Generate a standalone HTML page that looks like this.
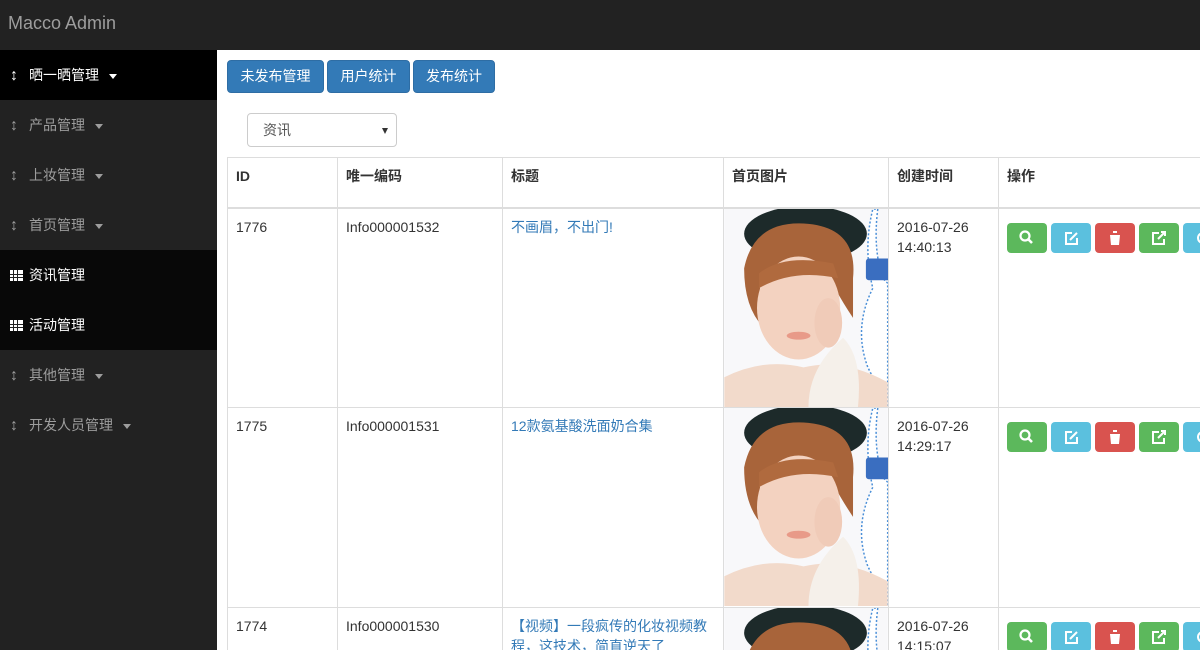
<!DOCTYPE html>
<html><head><meta charset="utf-8"><style>
*{box-sizing:border-box;margin:0;padding:0}
html,body{width:1200px;height:650px;overflow:hidden}
body{font-family:"Liberation Sans","Noto Sans CJK SC",sans-serif;font-size:14px;color:#333;background:#fff;position:relative}
.nav{position:absolute;left:0;top:0;width:1200px;height:50px;background:#222}
.brand{position:absolute;left:8px;top:13px;font-size:18px;color:#9d9d9d}
.side{position:absolute;left:0;top:50px;width:217px;height:600px;background:#222}
.it{height:50px;line-height:50px;padding-left:10px;color:#9d9d9d;position:relative}
.it.act{background:#000;color:#fff}
.it.sub{background:#080808;color:#fff}
.ar{display:inline-block;width:8px;margin-right:11px;font-weight:bold;font-size:16px}
.caret{display:inline-block;width:0;height:0;border-left:4px solid transparent;border-right:4px solid transparent;border-top:5px solid currentColor;margin-left:10px;vertical-align:middle}
.grid{display:inline-block;width:13px;height:11px;margin-right:6px;vertical-align:-1px;background:
linear-gradient(90deg,transparent 3px,#222 3px,#222 4px,transparent 4px,transparent 7px,#222 7px,#222 8px,transparent 8px),
linear-gradient(0deg,transparent 3px,#222 3px,#222 4px,transparent 4px,transparent 6px,#222 6px,#222 7px,transparent 7px),#fff}
.btn{position:absolute;top:60px;height:33px;line-height:31px;background:#337ab7;border:1px solid #2e6da4;color:#fff;border-radius:4px;text-align:center;font-size:14px}
.sel{position:absolute;left:247px;top:113px;width:150px;height:34px;border:1px solid #ccc;border-radius:4px;line-height:32px;padding-left:15px;color:#555}
.sel:after{content:"";position:absolute;right:8px;top:14px;border-left:3px solid transparent;border-right:3px solid transparent;border-top:6px solid #333}
table{position:absolute;left:227px;top:157px;border-collapse:collapse;table-layout:fixed;width:1000px}
td,th{border:1px solid #ddd;padding:8px;vertical-align:top;text-align:left;line-height:20px}
th{height:50px;border-bottom:2px solid #ddd}
td{height:200px}
a{color:#337ab7;text-decoration:none}
td.img{padding:0}
td svg{display:block}
</style></head><body>
<div class="nav"><div class="brand">Macco Admin</div></div>
<div class="side">
<div class="it act"><span class="ar">↕</span>晒一晒管理<span class="caret"></span></div>
<div class="it"><span class="ar">↕</span>产品管理<span class="caret"></span></div>
<div class="it"><span class="ar">↕</span>上妆管理<span class="caret"></span></div>
<div class="it"><span class="ar">↕</span>首页管理<span class="caret"></span></div>
<div class="it sub"><span class="grid"></span>资讯管理</div>
<div class="it sub"><span class="grid"></span>活动管理</div>
<div class="it"><span class="ar">↕</span>其他管理<span class="caret"></span></div>
<div class="it"><span class="ar">↕</span>开发人员管理<span class="caret"></span></div>
</div>
<div class="btn" style="left:227px;width:97px">未发布管理</div>
<div class="btn" style="left:327px;width:83px">用户统计</div>
<div class="btn" style="left:413px;width:82px">发布统计</div>
<div class="sel">资讯</div>
<svg width="0" height="0" style="position:absolute"><defs>
<symbol id="face" viewBox="0 0 165 200">
<rect width="165" height="200" fill="#f8f8fa"/>
<path d="M155 0 Q150 40 160 70 L165 75 L165 200 L145 160 Q130 120 150 80 Q140 40 150 0Z" fill="#fff" stroke="#4a8fd8" stroke-width="1.5" stroke-dasharray="2 2"/>
<rect x="143" y="50" width="25" height="22" fill="#3a6ec0" rx="3"/>
<ellipse cx="82" cy="25" rx="62" ry="28" fill="#1d2a2a"/>
<path d="M20 60 Q30 10 85 15 Q135 20 130 70 L130 110 Q110 80 100 55 Q70 60 35 70 L40 120 Q20 100 20 60Z" fill="#a8643a"/>
<ellipse cx="75" cy="100" rx="42" ry="52" fill="#f3d2c0"/>
<path d="M35 65 Q60 45 110 55 L115 70 Q70 60 35 80Z" fill="#b06a3e"/>
<path d="M0 170 Q40 150 80 160 Q120 150 165 175 L165 200 L0 200Z" fill="#f2dacb"/>
<path d="M120 130 Q140 150 135 200 L85 200 Q85 160 120 130Z" fill="#f5f0ea"/>
<ellipse cx="105" cy="115" rx="14" ry="25" fill="#f0cbb8"/>
<ellipse cx="75" cy="128" rx="12" ry="4" fill="#e89a88"/>
</symbol>
<symbol id="acts" viewBox="0 0 200 30">
<rect x="0" width="40" height="30" rx="4" fill="#5cb85c"/>
<circle cx="18" cy="13" r="4.5" fill="none" stroke="#fff" stroke-width="2.2"/><path d="M21 16 L25 20" stroke="#fff" stroke-width="2.6"/>
<rect x="44" width="40" height="30" rx="4" fill="#5bc0de"/>
<path d="M65 10 H59 V21 H70 V15" fill="none" stroke="#fff" stroke-width="2"/><path d="M63 17 L70 10" stroke="#fff" stroke-width="2"/>
<rect x="88" width="40" height="30" rx="4" fill="#d9534f"/>
<path d="M102 10 H114 M106 10 V8 H110 V10 M103 12 H113 L112 22 H104Z" fill="#fff"/>
<rect x="132" width="40" height="30" rx="4" fill="#5cb85c"/>
<path d="M152 10 H146 V21 H157 V16" fill="none" stroke="#fff" stroke-width="2"/><path d="M151 16 L158 9 M154 9 H158 V13" stroke="#fff" stroke-width="2" fill="none"/>
<rect x="176" width="40" height="30" rx="4" fill="#5bc0de"/>
<circle cx="196" cy="15" r="5" fill="none" stroke="#fff" stroke-width="2"/>
</symbol>
</defs></svg>
<table>
<colgroup><col style="width:110px"><col style="width:165px"><col style="width:221px"><col style="width:165px"><col style="width:110px"><col style="width:229px"></colgroup>
<tr><th>ID</th><th>唯一编码</th><th>标题</th><th>首页图片</th><th>创建时间</th><th>操作</th></tr>
<tr><td>1776</td><td>Info000001532</td><td><a>不画眉，不出门!</a></td><td class="img"><svg width="164" height="198"><use href="#face"/></svg></td><td>2016-07-26 14:40:13</td><td style="padding-top:14px"><svg width="200" height="30"><use href="#acts"/></svg></td></tr>
<tr><td>1775</td><td>Info000001531</td><td><a>12款氨基酸洗面奶合集</a></td><td class="img"><svg width="164" height="198"><use href="#face"/></svg></td><td>2016-07-26 14:29:17</td><td style="padding-top:14px"><svg width="200" height="30"><use href="#acts"/></svg></td></tr>
<tr><td>1774</td><td>Info000001530</td><td><a>【视频】一段疯传的化妆视频教程，这技术，简直逆天了</a></td><td class="img"><svg width="164" height="198"><use href="#face"/></svg></td><td>2016-07-26 14:15:07</td><td style="padding-top:14px"><svg width="200" height="30"><use href="#acts"/></svg></td></tr>
</table>
</body></html>
